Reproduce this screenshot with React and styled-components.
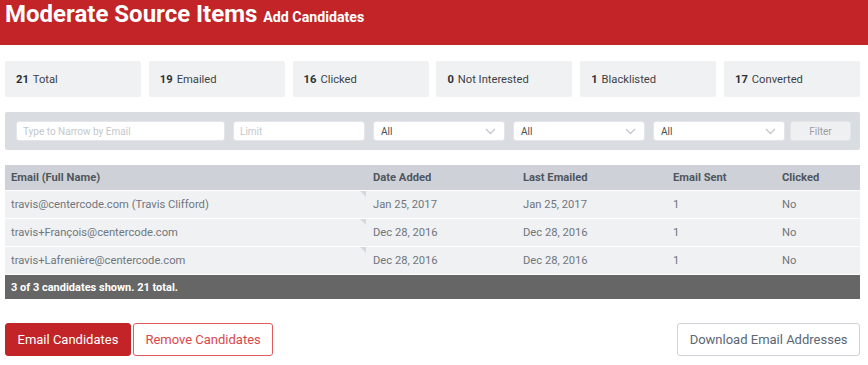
import React from "react";
import styled, { createGlobalStyle } from "styled-components";

const Global = createGlobalStyle`
  html, body { margin: 0; padding: 0; background: #fff; }
  body { font-family: Roboto, "Liberation Sans", Arial, sans-serif; }
  * { box-sizing: border-box; }
`;

const Page = styled.div`
  width: 868px;
  height: 365px;
  overflow: hidden;
`;

const Header = styled.header`
  height: 45px;
  background: #c22428;
  color: #fff;
  padding: 0 5px;
  display: flex;
  align-items: baseline;
  gap: 6px;
`;

const Title = styled.h1`
  margin: 0;
  font-size: 24px;
  line-height: 29px;
  font-weight: 700;
`;

const Subtitle = styled.span`
  font-size: 14.2px;
  font-weight: 700;
`;

const Content = styled.main`
  padding: 16px 8px 0 5px;
  display: flex;
  flex-direction: column;
`;

const Stats = styled.div`
  display: grid;
  grid-template-columns: repeat(6, 1fr);
  gap: 7.8px;
`;

const StatCard = styled.div`
  height: 36px;
  background: #f0f1f2;
  border-radius: 2px;
  display: flex;
  align-items: center;
  padding-left: 11px;
  font-size: 11.2px;
  color: #3d4248;
`;

const StatNum = styled.b`
  font-weight: 700;
  margin-right: 4px;
  color: #2c3035;
`;

const FilterBar = styled.div`
  margin-top: 15px;
  height: 38px;
  background: #d9dce0;
  border-radius: 2px;
  display: flex;
  align-items: center;
  padding: 0 8px 0 11px;
  gap: 8px;
`;

const Input = styled.input`
  width: ${(p) => p.$w}px;
  height: 20px;
  border: 1px solid #e3e5e8;
  border-radius: 3px;
  background: #fff;
  padding: 0 6px;
  font-family: inherit;
  font-size: 10px;
  color: #555;
  outline: none;
  &::placeholder { color: #c4c8ce; }
`;

const Select = styled.div`
  width: ${(p) => p.$w}px;
  height: 20px;
  border: 1px solid #e3e5e8;
  border-radius: 3px;
  background: #fff;
  padding: 0 8px 0 7px;
  display: flex;
  align-items: center;
  justify-content: space-between;
  font-size: 10px;
  color: #4a4f55;
`;

const FilterButton = styled.button`
  margin-left: -3px;
  width: 61px;
  height: 20px;
  border: 1px solid #e3e5e8;
  border-radius: 3px;
  background: #eff0f2;
  color: #9a9ea4;
  font-family: inherit;
  font-size: 10px;
  padding: 0;
`;

const Table = styled.div`
  margin-top: 15px;
  display: flex;
  flex-direction: column;
  gap: 1px;
`;

const Row = styled.div`
  display: grid;
  grid-template-columns: 362px 150px 150px 109px 1fr;
  height: ${(p) => (p.$head ? 25 : 27)}px;
  background: ${(p) => (p.$head ? "#ced2d8" : "#f0f1f2")};
  align-items: center;
  font-size: 11.2px;
  color: ${(p) => (p.$head ? "#50565e" : "#6f7680")};
  font-weight: ${(p) => (p.$head ? 700 : 400)};
`;

const Cell = styled.div`
  padding-left: 6px;
  height: 100%;
  display: flex;
  align-items: center;
  position: relative;
`;

const Corner = styled.span`
  position: absolute;
  top: 0;
  right: 1px;
  width: 0;
  height: 0;
  border-top: 6px solid #d5d8dc;
  border-left: 6px solid transparent;
`;

const Footer = styled.div`
  height: 24px;
  background: #666;
  color: #fff;
  font-size: 11px;
  font-weight: 700;
  display: flex;
  align-items: center;
  padding-left: 6px;
`;

const Actions = styled.div`
  margin-top: 24px;
  display: flex;
  gap: 2px;
`;

const Button = styled.button`
  height: 33px;
  border-radius: 3px;
  font-family: inherit;
  font-size: 13px;
  padding: 0 11.5px;
  cursor: pointer;
  ${(p) =>
    p.$variant === "primary" &&
    `background:#c22428;color:#fff;border:1px solid #c22428;`}
  ${(p) =>
    p.$variant === "danger" &&
    `background:#fff;color:#d9474b;border:1px solid #e25c5f;`}
  ${(p) =>
    p.$variant === "default" &&
    `background:#fff;color:#5b6674;border:1px solid #cfd2d6;margin-left:auto;`}
`;

const Chevron = () => (
  <svg width="11" height="7" viewBox="0 0 11 7">
    <polyline points="1,1 5.5,5.5 10,1" fill="none" stroke="#c3c7cc" strokeWidth="1.3" />
  </svg>
);

const stats = [
  ["21", "Total"],
  ["19", "Emailed"],
  ["16", "Clicked"],
  ["0", "Not Interested"],
  ["1", "Blacklisted"],
  ["17", "Converted"],
];

const rows = [
  ["travis@centercode.com (Travis Clifford)", "Jan 25, 2017", "Jan 25, 2017", "1", "No"],
  ["travis+François@centercode.com", "Dec 28, 2016", "Dec 28, 2016", "1", "No"],
  ["travis+Lafrenière@centercode.com", "Dec 28, 2016", "Dec 28, 2016", "1", "No"],
];

export default function App() {
  return (
    <Page>
      <Global />
      <Header>
        <Title>Moderate Source Items</Title>
        <Subtitle>Add Candidates</Subtitle>
      </Header>
      <Content>
        <Stats>
          {stats.map(([n, l]) => (
            <StatCard key={l}>
              <StatNum>{n}</StatNum>
              {l}
            </StatCard>
          ))}
        </Stats>
        <FilterBar>
          <Input $w={209} placeholder="Type to Narrow by Email" />
          <Input $w={132} placeholder="Limit" />
          <Select $w={132}>
            All <Chevron />
          </Select>
          <Select $w={132}>
            All <Chevron />
          </Select>
          <Select $w={132}>
            All <Chevron />
          </Select>
          <FilterButton>Filter</FilterButton>
        </FilterBar>
        <Table>
          <Row $head>
            <Cell>Email (Full Name)</Cell>
            <Cell>Date Added</Cell>
            <Cell>Last Emailed</Cell>
            <Cell>Email Sent</Cell>
            <Cell>Clicked</Cell>
          </Row>
          {rows.map((r) => (
            <Row key={r[0]}>
              <Cell>
                {r[0]}
                <Corner />
              </Cell>
              <Cell>{r[1]}</Cell>
              <Cell>{r[2]}</Cell>
              <Cell>{r[3]}</Cell>
              <Cell>{r[4]}</Cell>
            </Row>
          ))}
          <Footer>3 of 3 candidates shown. 21 total.</Footer>
        </Table>
        <Actions>
          <Button $variant="primary">Email Candidates</Button>
          <Button $variant="danger">Remove Candidates</Button>
          <Button $variant="default">Download Email Addresses</Button>
        </Actions>
      </Content>
    </Page>
  );
}
